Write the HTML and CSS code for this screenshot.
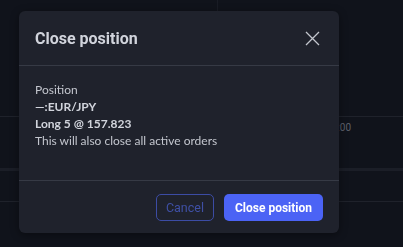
FILE: index.html
```html
<!DOCTYPE html>
<html lang="en">
<head>
    <meta charset="UTF-8">
    <meta name="viewport" content="width=device-width, initial-scale=1.0">
    <title>Close position</title>
    <link rel="stylesheet" href="styles.css">
</head>
<body>
    <div class="chart">
        <div class="pane pane-top">
            <div class="pane-left"></div>
            <div class="pane-right"></div>
        </div>
        <div class="pane pane-mid">
            <span class="axis-label">00:00</span>
        </div>
        <div class="band"></div>
        <div class="pane pane-low"></div>
    </div>

    <div class="dialog" role="dialog">
        <div class="dialog-header">
            <h2 class="dialog-title">Close position</h2>
            <button class="close-btn" aria-label="Close">
                <svg width="15" height="15" viewBox="0 0 15 15">
                    <path d="M1 1 L14 14 M14 1 L1 14" stroke="#c3c6ce" stroke-width="1.3" fill="none"/>
                </svg>
            </button>
        </div>
        <div class="dialog-body">
            <div class="line">Position</div>
            <div class="line strong">—:EUR/JPY</div>
            <div class="line strong">Long 5 @ 157.823</div>
            <div class="line">This will also close all active orders</div>
        </div>
        <div class="dialog-footer">
            <button class="btn btn-outline">Cancel</button>
            <button class="btn btn-primary">Close position</button>
        </div>
    </div>
</body>
</html>
```

FILE: styles.css
```css
:root {
    --page-bg: #10131b;
    --dialog-bg: #1f222c;
    --divider: #363a45;
    --text-color: #d1d4dc;
    --muted-text: #c3c6ce;
    --primary-color: #4b63f5;
}

* {
    box-sizing: border-box;
    margin: 0;
    padding: 0;
}

body {
    font-family: Roboto, 'Liberation Sans', sans-serif;
    background-color: var(--page-bg);
    color: var(--text-color);
    height: 247px;
    overflow: hidden;
}

/* chart behind the dialog */
.pane {
    border-bottom: 1px solid #1f222b;
}

.pane-top {
    height: 117px;
    display: flex;
}

.pane-left {
    width: 218px;
    border-right: 1px solid #191c25;
}

.pane-mid {
    height: 51px;
    display: flex;
    justify-content: flex-end;
    border-bottom: none;
}

.axis-label {
    font-size: 10px;
    color: #5d606b;
    margin-top: 5px;
    margin-right: 52px;
}

.band {
    height: 3px;
    background-color: #1b1e27;
}

.pane-low {
    height: 31px;
}

/* dialog */
.dialog {
    position: fixed;
    left: 19px;
    top: 11px;
    width: 320px;
    height: 222px;
    background-color: var(--dialog-bg);
    border-radius: 6px;
    box-shadow: 0 2px 8px rgba(0, 0, 0, 0.4);
    display: flex;
    flex-direction: column;
}

.dialog-header {
    height: 55px;
    display: flex;
    justify-content: space-between;
    align-items: center;
    padding: 0 19px 0 16px;
    border-bottom: 1px solid var(--divider);
}

.dialog-title {
    font-size: 16px;
    font-weight: bold;
    color: var(--text-color);
}

.close-btn {
    background: none;
    border: none;
    display: flex;
    cursor: pointer;
}

.dialog-body {
    flex: 1;
    padding: 15px 16px;
    font-family: Lato, Roboto, sans-serif;
    font-size: 12px;
    line-height: 17px;
    color: var(--muted-text);
}

.strong {
    font-weight: bold;
    color: var(--text-color);
}

.dialog-footer {
    height: 53px;
    display: flex;
    justify-content: flex-end;
    align-items: flex-start;
    gap: 10px;
    padding: 13px 16px 0;
    border-top: 1px solid var(--divider);
}

.btn {
    height: 27px;
    padding: 0 11px;
    border-radius: 5px;
    font-family: inherit;
    font-size: 12px;
    cursor: pointer;
}

.btn-outline {
    background: none;
    border: 1px solid #3c4ca4;
    color: #3f50a6;
    font-size: 12.5px;
    padding: 0 9px;
}

.btn-primary {
    background-color: var(--primary-color);
    border: none;
    color: #fff;
    font-weight: bold;
}
```
